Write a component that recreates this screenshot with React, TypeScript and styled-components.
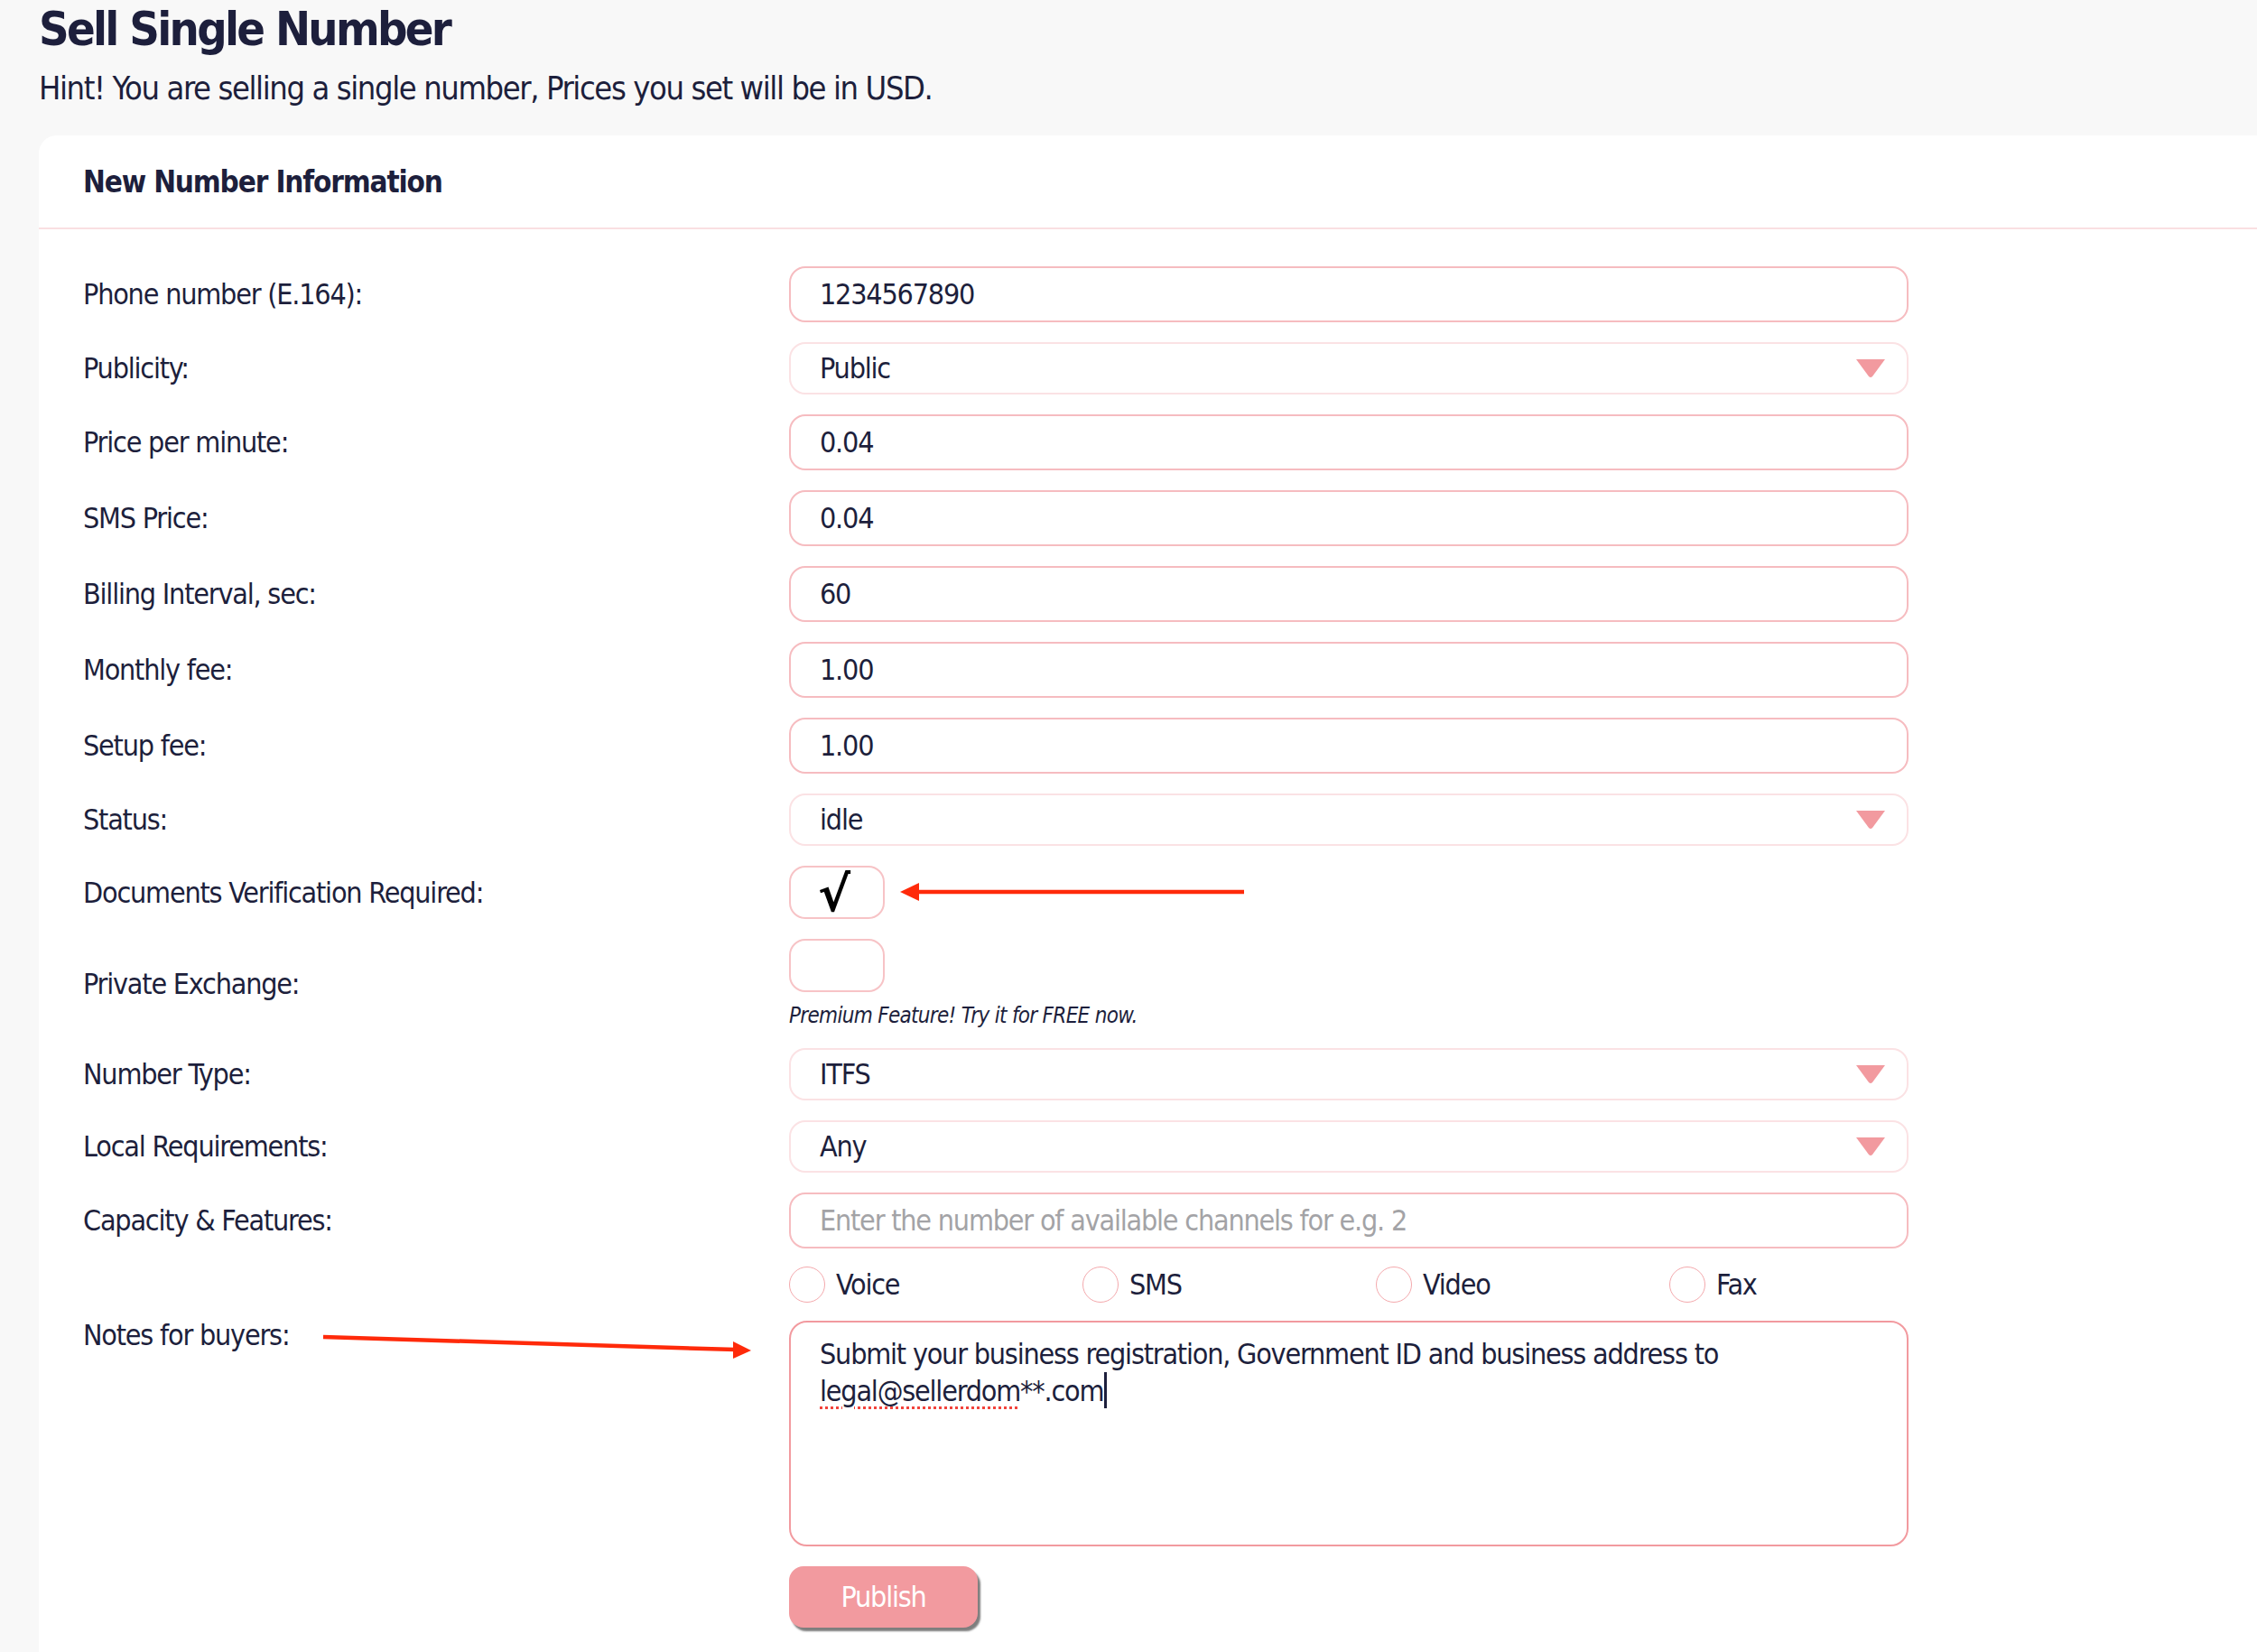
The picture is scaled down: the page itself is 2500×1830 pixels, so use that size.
import React from 'react'
import styled, { createGlobalStyle } from 'styled-components'

const navy = '#1d1f3c'
const pink = '#f29a9f'

const GlobalStyle = createGlobalStyle`
    html, body {
        margin: 0;
        padding: 0;
        background: #f8f8f8;
    }
    body {
        font-family: 'Liberation Sans Narrow', 'Arial Narrow', 'DejaVu Sans Condensed', Roboto, sans-serif;
        letter-spacing: -1.2px;
        color: ${navy};
    }
    * {
        box-sizing: border-box;
    }
`

const Page = styled.div`
    position: relative;
    width: 2500px;
    height: 1830px;
    overflow: hidden;
    padding-left: 43px;
`

const Title = styled.h1`
    margin: 0;
    font-size: 52px;
    line-height: 64px;
    font-weight: 700;
    letter-spacing: -2.7px;
`

const Hint = styled.p`
    margin: 12px 0 30px;
    font-size: 36px;
    line-height: 44px;
    letter-spacing: -1.4px;
`

const Card = styled.div`
    width: 2600px;
    min-height: 1800px;
    background: #fff;
    border-radius: 20px 0 0 0;
`

const CardHeader = styled.div`
    height: 104px;
    display: flex;
    align-items: center;
    padding-left: 49px;
    border-bottom: 2px solid #fadfe2;
    font-size: 33px;
    font-weight: 700;
    letter-spacing: -1.15px;
`

const Form = styled.div`
    display: grid;
    grid-template-columns: 782px 1240px;
    row-gap: 22px;
    align-items: center;
    padding: 41px 0 0 49px;
`

const Label = styled.label<{ top?: boolean }>`
    font-size: 32px;
    line-height: 40px;
    align-self: ${({ top }) => (top ? 'start' : 'center')};
    margin-top: ${({ top }) => (top ? '-4px' : '0')};
`

const TextInput = styled.input`
    width: 100%;
    height: 62px;
    border: 2px solid #f6bcc0;
    border-radius: 18px;
    padding: 0 32px;
    font-family: inherit;
    font-size: 32px;
    letter-spacing: inherit;
    color: ${navy};
    background: #fff;
    outline: none;

    &::placeholder {
        color: #a3a3a6;
    }
`

const SelectBox = styled.div`
    height: 58px;
    display: flex;
    align-items: center;
    justify-content: space-between;
    border: 2px solid #fbe2e4;
    border-radius: 18px;
    padding: 0 22px 0 32px;
    font-size: 32px;
`

const CheckBox = styled.div`
    width: 106px;
    height: 59px;
    display: flex;
    align-items: center;
    justify-content: center;
    border: 2px solid #f7c3c6;
    border-radius: 18px;
    font-family: 'DejaVu Sans', sans-serif;
    font-size: 54px;
    font-weight: 700;
    letter-spacing: 0;
    color: #000;
    padding: 4px 6px 0 0;
`

const Stack = styled.div`
    display: flex;
    flex-direction: column;
`

const Premium = styled.div`
    padding-top: 13px;
    font-size: 24px;
    line-height: 27px;
    font-style: italic;
    letter-spacing: -0.7px;
`

const RadioRow = styled.div`
    display: flex;
    margin: -2px 0;
`

const RadioItem = styled.label`
    flex: 0 0 325px;
    display: flex;
    align-items: center;
    gap: 12px;
    font-size: 32px;
    line-height: 40px;
`

const RadioCircle = styled.span`
    width: 40px;
    height: 40px;
    border-radius: 50%;
    border: 1.5px solid #f4a9ad;
`

const NotesBox = styled.div`
    height: 250px;
    border: 2.5px solid ${pink};
    border-radius: 20px;
    padding: 15px 32px;
    font-size: 32px;
    line-height: 40px;
`

const Misspelled = styled.span`
    text-decoration: underline dotted #f2433b;
    text-decoration-thickness: 3px;
    text-underline-offset: 6px;
`

const Caret = styled.span`
    display: inline-block;
    width: 3px;
    height: 40px;
    margin-left: 1px;
    background: ${navy};
    vertical-align: -8px;
`

const PublishButton = styled.button`
    width: 209px;
    height: 68px;
    border: none;
    border-radius: 16px;
    background: ${pink};
    color: #fff;
    font-family: inherit;
    font-size: 32px;
    letter-spacing: -1.2px;
    box-shadow: 3px 4px 2px rgba(40, 40, 40, 0.6);
`

const Overlay = styled.svg`
    position: absolute;
    left: 0;
    top: 0;
    pointer-events: none;
`

function DropArrow() {
    return (
        <svg width="36" height="22" viewBox="0 0 36 22">
            <path d="M2 1 H34 L20 20 Q18 22 16 20 Z" fill={pink} />
        </svg>
    )
}

const inputs: [string, string][] = [
    ['Price per minute:', '0.04'],
    ['SMS Price:', '0.04'],
    ['Billing Interval, sec:', '60'],
    ['Monthly fee:', '1.00'],
    ['Setup fee:', '1.00']
]

export default function App() {
    return (
        <Page>
            <GlobalStyle />
            <Title>Sell Single Number</Title>
            <Hint>Hint! You are selling a single number, Prices you set will be in USD.</Hint>
            <Card>
                <CardHeader>New Number Information</CardHeader>
                <Form>
                    <Label>Phone number (E.164):</Label>
                    <TextInput defaultValue="1234567890" />

                    <Label>Publicity:</Label>
                    <SelectBox>
                        Public
                        <DropArrow />
                    </SelectBox>

                    {inputs.map(([label, value]) => (
                        <React.Fragment key={label}>
                            <Label>{label}</Label>
                            <TextInput defaultValue={value} />
                        </React.Fragment>
                    ))}

                    <Label>Status:</Label>
                    <SelectBox>
                        idle
                        <DropArrow />
                    </SelectBox>

                    <Label>Documents Verification Required:</Label>
                    <CheckBox>√</CheckBox>

                    <Label>Private Exchange:</Label>
                    <Stack>
                        <CheckBox />
                        <Premium>Premium Feature! Try it for FREE now.</Premium>
                    </Stack>

                    <Label>Number Type:</Label>
                    <SelectBox>
                        ITFS
                        <DropArrow />
                    </SelectBox>

                    <Label>Local Requirements:</Label>
                    <SelectBox>
                        Any
                        <DropArrow />
                    </SelectBox>

                    <Label>Capacity &amp; Features:</Label>
                    <TextInput placeholder="Enter the number of available channels for e.g. 2" />

                    <span />
                    <RadioRow>
                        {['Voice', 'SMS', 'Video', 'Fax'].map(f => (
                            <RadioItem key={f}>
                                <RadioCircle />
                                {f}
                            </RadioItem>
                        ))}
                    </RadioRow>

                    <Label top>Notes for buyers:</Label>
                    <NotesBox>
                        Submit your business registration, Government ID and business address to
                        <br />
                        <Misspelled>legal@sellerdom</Misspelled>**.com
                        <Caret />
                    </NotesBox>

                    <span />
                    <div>
                        <PublishButton>Publish</PublishButton>
                    </div>
                </Form>
            </Card>
            <Overlay width="2500" height="1830" viewBox="0 0 2500 1830">
                <line x1="1378" y1="988" x2="1012" y2="988" stroke="#ff2a0a" strokeWidth="4.5" />
                <polygon points="997,988 1018,978 1018,998" fill="#ff2a0a" />
                <line x1="358" y1="1481" x2="815" y2="1495" stroke="#ff2a0a" strokeWidth="4.5" />
                <polygon points="832,1496 812,1486 812,1505" fill="#ff2a0a" />
            </Overlay>
        </Page>
    )
}
